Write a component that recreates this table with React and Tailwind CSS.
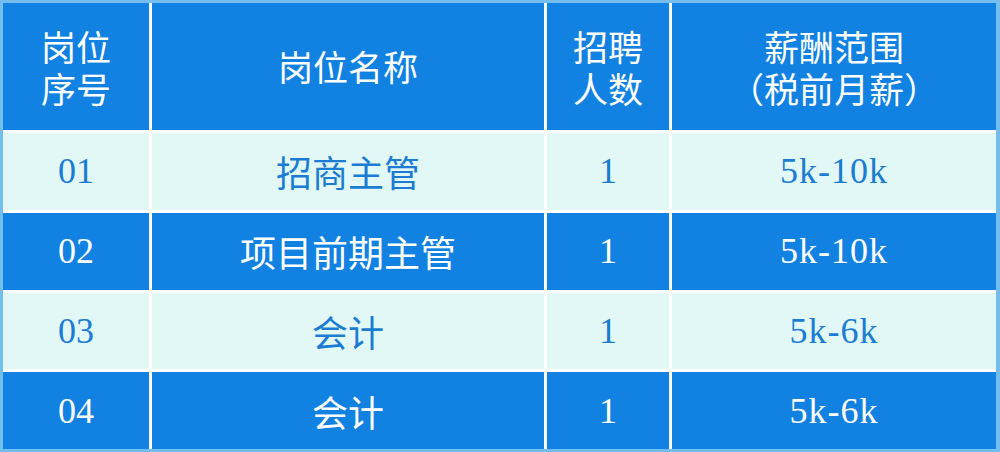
import React from "react";

const rows = [
  { no: "01", name: "招商主管", count: "1", pay: "5k-10k" },
  { no: "02", name: "项目前期主管", count: "1", pay: "5k-10k" },
  { no: "03", name: "会计", count: "1", pay: "5k-6k" },
  { no: "04", name: "会计", count: "1", pay: "5k-6k" },
];

const cjk = "font-['Noto_Sans_CJK_SC',sans-serif]";
const num = "font-['Liberation_Serif','Noto_Sans_CJK_SC',serif]";

export default function App() {
  return (
    <div className="w-[1000px] h-[452px] bg-[#74bdef] pt-[3px] pl-[3px] pr-[4px] pb-[3px]">
      <div className="grid h-full grid-cols-[146px_392px_122px_1fr] grid-rows-[127px_1fr_1fr_1fr_1fr] gap-[3px] bg-white">
        {/* Header */}
        <div className={`bg-[#1181e2] text-white flex flex-col items-center justify-center text-[35px] leading-[42px] ${cjk}`}>
          <span>岗位</span>
          <span>序号</span>
        </div>
        <div className={`bg-[#1181e2] text-white flex items-center justify-center text-[35px] ${cjk}`}>
          岗位名称
        </div>
        <div className={`bg-[#1181e2] text-white flex flex-col items-center justify-center text-[35px] leading-[42px] ${cjk}`}>
          <span>招聘</span>
          <span>人数</span>
        </div>
        <div className={`bg-[#1181e2] text-white flex flex-col items-center justify-center text-[35px] leading-[42px] ${cjk}`}>
          <span>薪酬范围</span>
          <span>（税前月薪）</span>
        </div>

        {/* Body */}
        {rows.map((r, i) => {
          const tone = i % 2 === 0 ? "bg-[#e2f8f6] text-[#1a7dd3]" : "bg-[#1181e2] text-white";
          return (
            <React.Fragment key={r.no}>
              <div className={`${tone} flex items-center justify-center text-[36px] ${num}`}>{r.no}</div>
              <div className={`${tone} flex items-center justify-center text-[36px] ${cjk}`}>{r.name}</div>
              <div className={`${tone} flex items-center justify-center text-[36px] ${num}`}>{r.count}</div>
              <div className={`${tone} flex items-center justify-center text-[36px] tracking-[1px] ${num}`}>{r.pay}</div>
            </React.Fragment>
          );
        })}
      </div>
    </div>
  );
}
